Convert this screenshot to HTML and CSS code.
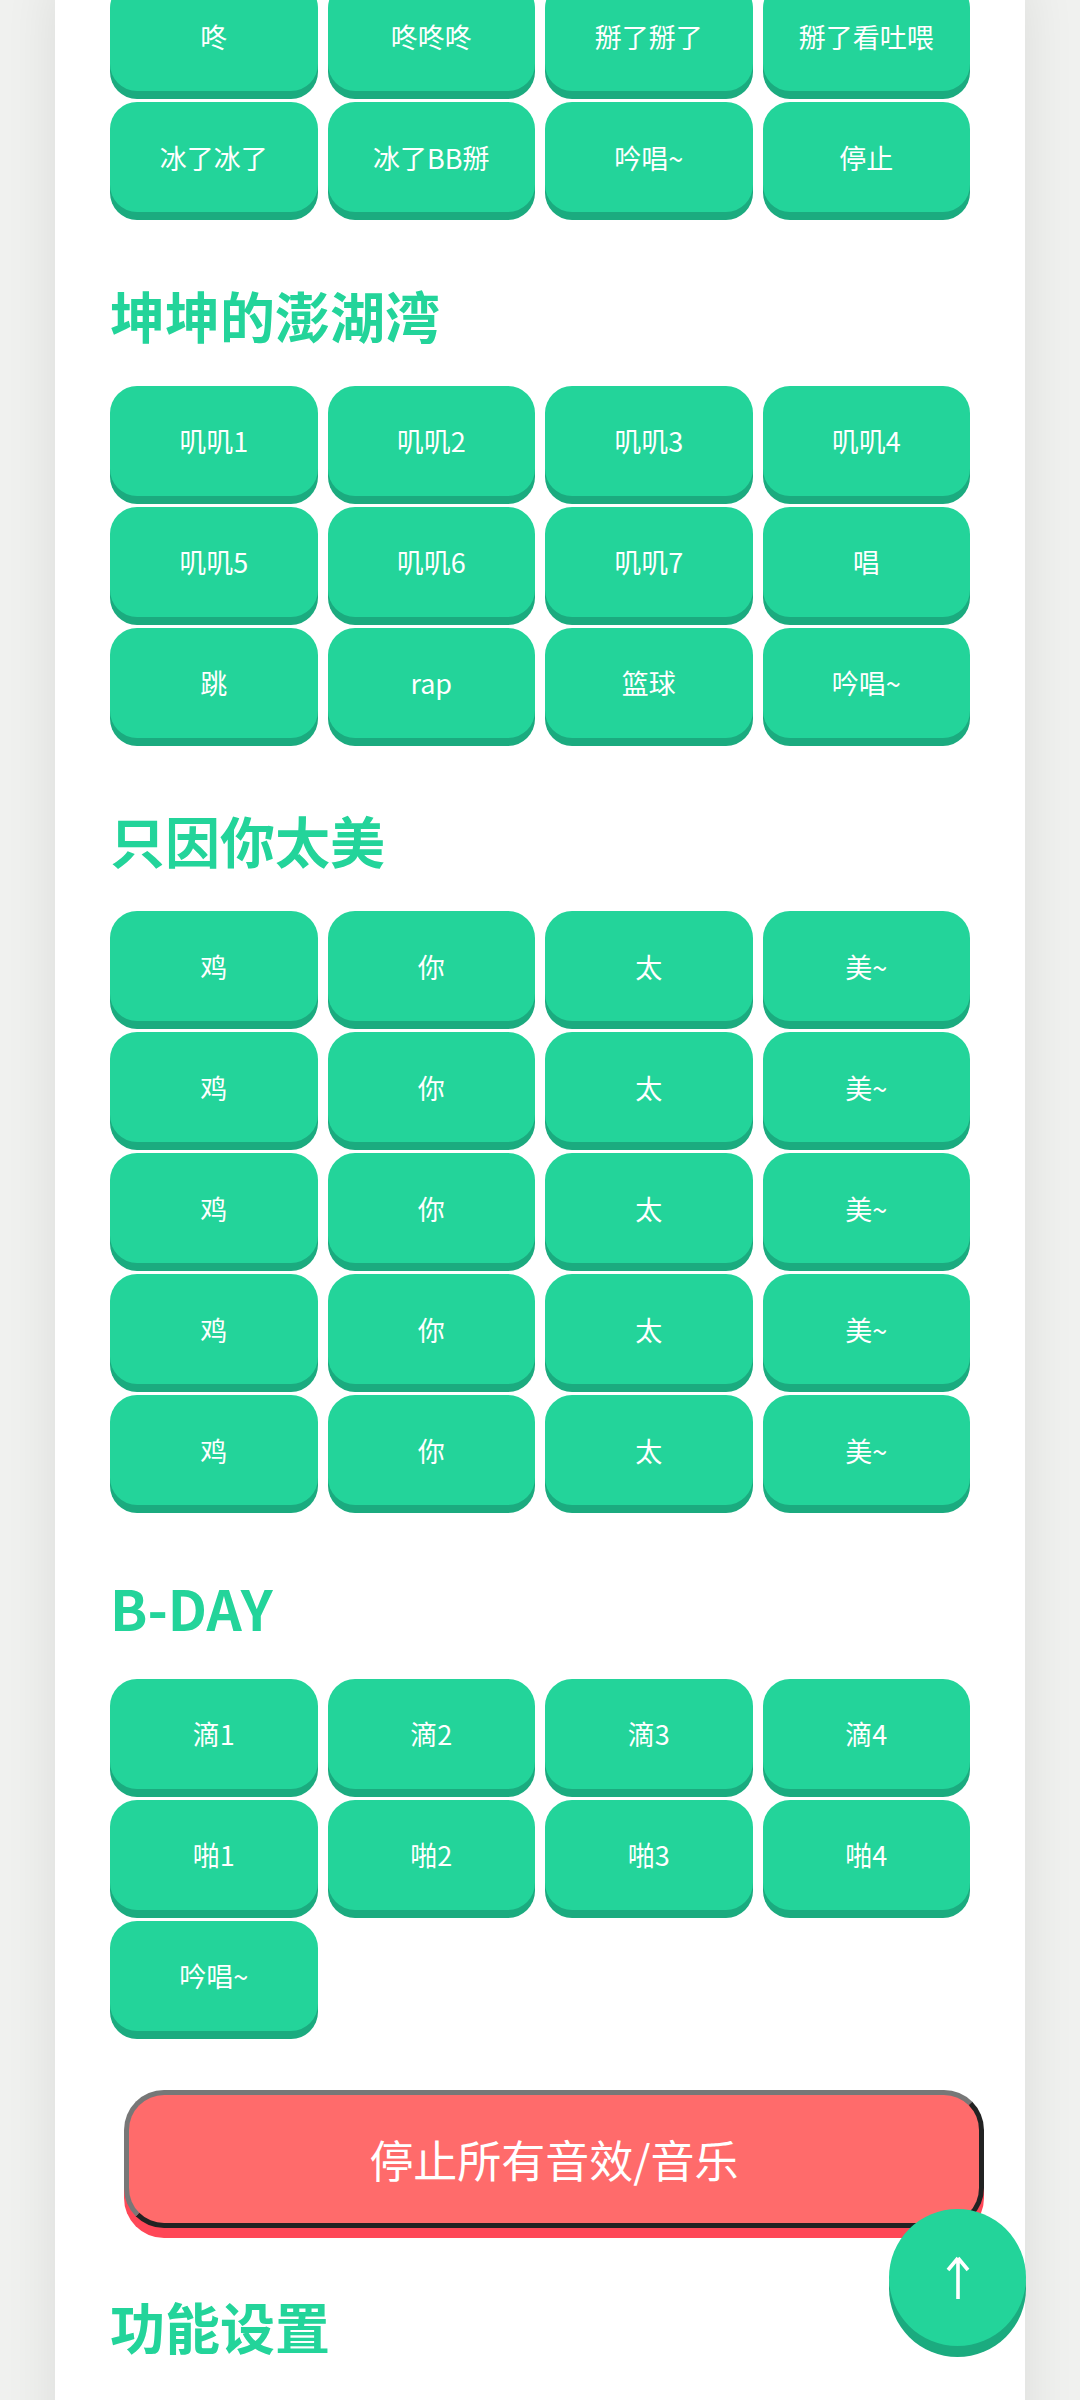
FILE: index.html
```html
<!DOCTYPE html>
<html lang="zh-CN">
<head>
<meta charset="utf-8">
<title>音效</title>
<link rel="stylesheet" href="styles.css">
</head>
<body>
<main class="page">
  <section class="group group-first">
    <div class="grid">
      <button class="btn">咚</button>
      <button class="btn">咚咚咚</button>
      <button class="btn">掰了掰了</button>
      <button class="btn">掰了看吐喂</button>
      <button class="btn">冰了冰了</button>
      <button class="btn">冰了BB掰</button>
      <button class="btn">吟唱~</button>
      <button class="btn">停止</button>
    </div>
  </section>

  <section class="group">
    <h2 class="title">坤坤的澎湖湾</h2>
    <div class="grid">
      <button class="btn">叽叽1</button>
      <button class="btn">叽叽2</button>
      <button class="btn">叽叽3</button>
      <button class="btn">叽叽4</button>
      <button class="btn">叽叽5</button>
      <button class="btn">叽叽6</button>
      <button class="btn">叽叽7</button>
      <button class="btn">唱</button>
      <button class="btn">跳</button>
      <button class="btn">rap</button>
      <button class="btn">篮球</button>
      <button class="btn">吟唱~</button>
    </div>
  </section>

  <section class="group">
    <h2 class="title">只因你太美</h2>
    <div class="grid">
      <button class="btn">鸡</button>
      <button class="btn">你</button>
      <button class="btn">太</button>
      <button class="btn">美~</button>
      <button class="btn">鸡</button>
      <button class="btn">你</button>
      <button class="btn">太</button>
      <button class="btn">美~</button>
      <button class="btn">鸡</button>
      <button class="btn">你</button>
      <button class="btn">太</button>
      <button class="btn">美~</button>
      <button class="btn">鸡</button>
      <button class="btn">你</button>
      <button class="btn">太</button>
      <button class="btn">美~</button>
      <button class="btn">鸡</button>
      <button class="btn">你</button>
      <button class="btn">太</button>
      <button class="btn">美~</button>
    </div>
  </section>

  <section class="group">
    <h2 class="title">B-DAY</h2>
    <div class="grid">
      <button class="btn">滴1</button>
      <button class="btn">滴2</button>
      <button class="btn">滴3</button>
      <button class="btn">滴4</button>
      <button class="btn">啪1</button>
      <button class="btn">啪2</button>
      <button class="btn">啪3</button>
      <button class="btn">啪4</button>
      <button class="btn">吟唱~</button>
    </div>
  </section>

  <button class="stop-all">停止所有音效/音乐</button>

  <section class="group group-settings">
    <h2 class="title">功能设置</h2>
  </section>
</main>

<button class="to-top" aria-label="回到顶部">
  <svg class="to-top-icon" width="24" height="45" viewBox="0 0 24 45" aria-hidden="true">
    <path d="M12 3 V44 M12 3 L2 15 M12 3 L22 15" fill="none" stroke="#ffffff" stroke-width="3.6" stroke-linecap="butt" stroke-linejoin="miter"/>
  </svg>
</button>
</body>
</html>
```

FILE: styles.css
```css
* {
  box-sizing: border-box;
}

html, body {
  margin: 0;
  padding: 0;
}

body {
  background: #f0f1ef;
  font-family: "Noto Sans CJK SC", "Noto Sans", sans-serif;
  min-height: 2400px;
  overflow: hidden;
}

.page {
  width: 970px;
  margin: -19px auto 0;
  padding: 0 55px 80px;
  background: #ffffff;
  min-height: 2500px;
  box-shadow: 0 0 50px rgba(0, 0, 0, 0.09);
}

.group {
  display: flex;
  flex-direction: column;
}

.title {
  margin: 67.5px 0 38px;
  font-size: 55px;
  line-height: 68px;
  font-weight: 700;
  color: #23d49a;
  letter-spacing: 0;
}

.grid {
  display: grid;
  grid-template-columns: repeat(4, 1fr);
  column-gap: 10px;
  row-gap: 11px;
}

.btn {
  height: 110px;
  border: none;
  border-radius: 27px;
  background: #23d49a;
  box-shadow: 0 8px 0 #1bab7f;
  color: #ffffff;
  font-family: "Noto Sans CJK SC", "Noto Sans", sans-serif;
  font-size: 27px;
  font-weight: 400;
  padding: 0;
}

.stop-all {
  display: block;
  width: 860px;
  height: 138px;
  margin: 59px 0 0 14px;
  border: 5px solid;
  border-color: #777777 #222222 #222222 #777777;
  border-radius: 40px;
  background: #ff6b6b;
  box-shadow: 0 10px 0 #ff4757;
  color: #ffffff;
  font-family: "Noto Sans CJK SC", "Noto Sans", sans-serif;
  font-size: 44px;
  font-weight: 400;
  padding: 0;
}

.group-settings .title {
  margin-top: 63px;
}

.to-top {
  position: fixed;
  right: 54px;
  bottom: 54px;
  width: 137px;
  height: 137px;
  border: none;
  border-radius: 50%;
  background: #23d49a;
  box-shadow: 0 11px 0 #1bab7f;
  display: flex;
  align-items: center;
  justify-content: center;
  padding: 0;
}

.to-top-icon {
  display: block;
}
```
